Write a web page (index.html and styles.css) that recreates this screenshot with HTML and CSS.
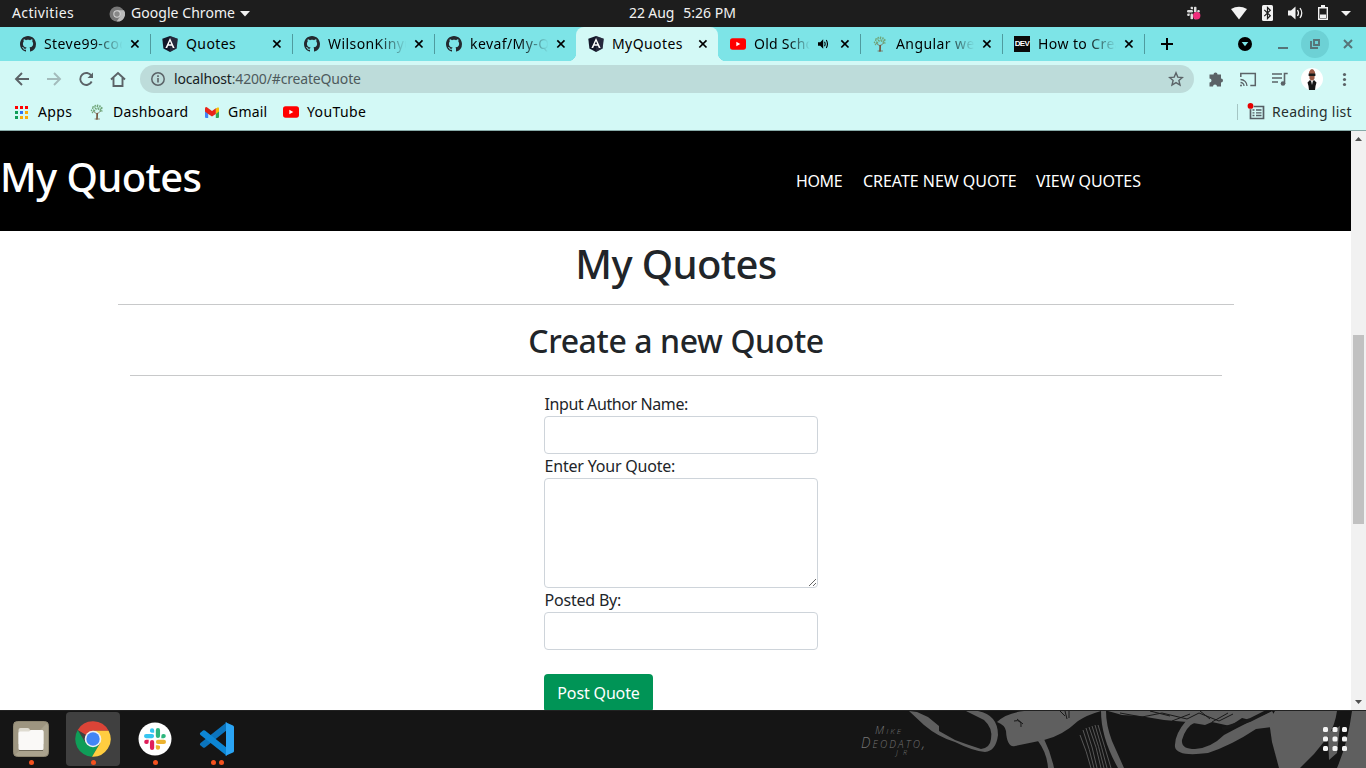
FILE: index.html
```html
<!DOCTYPE html>
<html lang="en">
<head>
<meta charset="utf-8">
<title>MyQuotes</title>
<link rel="stylesheet" href="styles.css">
</head>
<body>
<svg class="defs" aria-hidden="true">
  <symbol id="github" viewBox="0 0 16 16"><path fill="#24292f" d="M8 0C3.58 0 0 3.58 0 8c0 3.54 2.29 6.53 5.47 7.59.4.07.55-.17.55-.38 0-.19-.01-.82-.01-1.49-2.01.37-2.53-.49-2.69-.94-.09-.23-.48-.94-.82-1.13-.28-.15-.68-.52-.01-.53.63-.01 1.08.58 1.23.82.72 1.21 1.87.87 2.33.66.07-.52.28-.87.51-1.07-1.78-.2-3.64-.89-3.64-3.95 0-.87.31-1.59.82-2.15-.08-.2-.36-1.02.08-2.12 0 0 .67-.21 2.2.82.64-.18 1.32-.27 2-.27s1.36.09 2 .27c1.53-1.04 2.2-.82 2.2-.82.44 1.1.16 1.92.08 2.12.51.56.82 1.27.82 2.15 0 3.07-1.87 3.75-3.65 3.95.29.25.54.73.54 1.48 0 1.07-.01 1.93-.01 2.2 0 .21.15.46.55.38A8.01 8.01 0 0 0 16 8c0-4.42-3.58-8-8-8z"/></symbol>
  <symbol id="angular" viewBox="0 0 16 16"><path fill="#14182a" d="M8 0l7.7 2.7-1.1 9.8L8 16l-6.600-3.500L.3 2.700z"/><path fill="#35384a" d="M8 0v16l6.600-3.500L15.700 2.700z" opacity=".55"/><path fill="#fff" fill-rule="evenodd" d="M8 2l4.600 10H10.800l-.9-2.300H6.100L5.200 12H3.400zm0 3.200L6.700 8.300h2.600z"/></symbol>
  <symbol id="tree" viewBox="0 0 16 16"><g fill="none" stroke="#76563f" stroke-linecap="round"><path stroke-width="1.700" d="M8 15l.2-5.500"/><path stroke-width=".7" d="M6 15h4.500M8 10L4.500 7.500M8.200 10l3.500-3"/></g><g fill="none" stroke="#6fa578" stroke-width="1.500" stroke-linecap="round" stroke-dasharray=".2 2.300"><path d="M2.500 6.500c1-5 10-6 11 0M3.500 8.500c2-6 8-6 10 0M5.500 7c1-3 4-3 6 0M4 3c3-3 7-2 9 1"/></g></symbol>
  <symbol id="youtube" viewBox="0 0 16 12"><rect width="16" height="11.500" y=".2" rx="2.600" fill="#f00"/><path fill="#fff" d="M6.300 3.700v4.600L10.300 6z"/></symbol>
  <symbol id="close" viewBox="0 0 10 10"><path d="M1.300 1.300l7.200 7.200M8.500 1.300L1.300 8.500" stroke="currentColor" stroke-width="1.700"/></symbol>
  <symbol id="slack" viewBox="0 0 24 24">
    <g fill="var(--s1,#36c5f0)"><rect x="0" y="6.500" width="11" height="4.600" rx="2.300"/><path d="M6.500 2.500a2.300 2.300 0 0 1 4.600 0v2.600H8.800a2.300 2.300 0 0 1-2.300-2.600z"/></g>
    <g fill="var(--s2,#2eb67d)"><rect x="12.900" y="0" width="4.600" height="11" rx="2.300"/><path d="M21.500 6.500a2.300 2.300 0 0 1 0 4.600h-2.600V8.800a2.300 2.300 0 0 1 2.600-2.300z"/></g>
    <g fill="var(--s3,#ecb22e)"><rect x="13" y="12.900" width="11" height="4.600" rx="2.300"/><path d="M17.500 21.500a2.300 2.300 0 0 1-4.600 0v-2.600h2.300a2.300 2.300 0 0 1 2.300 2.600z"/></g>
    <g fill="var(--s4,#e01e5a)"><rect x="6.500" y="13" width="4.600" height="11" rx="2.300"/><path d="M2.500 17.500a2.300 2.300 0 0 1 0-4.600h2.600v2.300a2.300 2.300 0 0 1-2.600 2.300z"/></g>
  </symbol>
</svg>

<header class="panel">
  <span class="activities">Activities</span>
  <svg class="app-icon" viewBox="0 0 16 16"><circle cx="8" cy="8" r="7.500" fill="#777"/><path fill="#bbb" d="M8 4.200h7a7.500 7.500 0 0 1-7.400 11.300L11.400 10z"/><circle cx="8" cy="8" r="3.700" fill="#d4d4d4"/><circle cx="8" cy="8" r="2.700" fill="#888"/></svg>
  <span class="app-name">Google Chrome</span>
  <svg class="caret" viewBox="0 0 10 6"><path d="M0 0h10L5 5.500z" fill="#f2f2f2"/></svg>
  <span class="clock"><span>22 Aug</span><span class="time">5:26 PM</span></span>
  <svg class="tray" viewBox="1180 0 186 27">
    <g class="mono"><use href="#slack" x="1187" y="6.500" width="13" height="13"/></g>
    <circle cx="1196.700" cy="15.700" r="3.700" fill="#f02d7c"/>
    <path fill="#f2f2f2" d="M1231 9q8-4.500 16 0l-8 10.500z"/>
    <rect x="1262" y="5" width="11" height="16" rx="1.500" fill="#f2f2f2"/>
    <path d="M1264.300 9.800l6 6-2.800 2.700V7.500l2.800 2.700-6 6" fill="none" stroke="#1d1d1d" stroke-width="1.200"/>
    <path fill="#f2f2f2" d="M1288 10.500h3l4.500-4v13l-4.500-4h-3z"/>
    <path d="M1297.500 10q2 3 0 6M1300 8q3.500 5 0 10" fill="none" stroke="#f2f2f2" stroke-width="1.300"/>
    <path d="M1318.700 7.700h8.600v11.600h-8.600z" fill="none" stroke="#f2f2f2" stroke-width="1.400"/><path fill="#f2f2f2" d="M1321 5h4v2.500h-4zM1320 14.500h6V18h-6z"/>
    <path fill="#f2f2f2" d="M1341 11h10l-5 5z"/>
  </svg>
</header>

<nav class="tabs">
  <div class="tab"><svg class="fav"><use href="#github"/></svg><span class="title fade">Steve99-cod</span><svg class="x"><use href="#close"/></svg></div>
  <div class="tab"><svg class="fav"><use href="#angular"/></svg><span class="title">Quotes</span><svg class="x"><use href="#close"/></svg></div>
  <div class="tab"><svg class="fav"><use href="#github"/></svg><span class="title fade">WilsonKinyu</span><svg class="x"><use href="#close"/></svg></div>
  <div class="tab before-active"><svg class="fav"><use href="#github"/></svg><span class="title fade">kevaf/My-Q</span><svg class="x"><use href="#close"/></svg></div>
  <div class="tab active"><svg class="fav"><use href="#angular"/></svg><span class="title">MyQuotes</span><svg class="x"><use href="#close"/></svg></div>
  <div class="tab after-active"><svg class="fav yt"><use href="#youtube"/></svg><span class="title fade short">Old Scho</span><svg class="sound" viewBox="0 0 10 10"><path d="M0 3.300h2.200L5.200.3v9.400l-3-3H0z"/><path d="M6.500 2.800q1.300 2.200 0 4.400M8.300 1q2.300 4 0 8" fill="none" stroke="#000" stroke-width="1.100"/></svg><svg class="x"><use href="#close"/></svg></div>
  <div class="tab"><svg class="fav"><use href="#tree"/></svg><span class="title fade">Angular we</span><svg class="x"><use href="#close"/></svg></div>
  <div class="tab"><span class="dev">DEV</span><span class="title fade">How to Crea</span><svg class="x"><use href="#close"/></svg></div>
  <svg class="window-controls" viewBox="1144 27 222 34">
    <path d="M1144.500 34v20" stroke="#4f9b9f"/>
    <path d="M1161 44h12M1167 38v12" stroke="#000" stroke-width="2"/>
    <circle cx="1245" cy="44" r="7" fill="#000"/><path fill="#7de4e7" d="M1241.700 42h6.600l-3.300 4.300z"/>
    <path d="M1278 48h10" stroke="#567478" stroke-width="2"/>
    <circle cx="1315" cy="44" r="14" fill="#6dd1d5"/>
    <path d="M1314 40h5v5h-5zM1311 41v7h7" fill="none" stroke="#567478" stroke-width="1.900"/>
    <path d="M1344 40l8 8M1352 40l-8 8" stroke="#567478" stroke-width="2"/>
  </svg>
</nav>

<div class="toolbar">
  <svg class="nav-icons" viewBox="0 61 140 36" fill="none" stroke="#5b6367" stroke-width="1.900">
    <path d="M29 79H16M22 73l-6 6 6 6"/>
    <path d="M47 79h13M54 73l6 6-6 6" stroke="#a3bbbb"/>
    <path d="M91.500 76A6 6 0 1 0 91.700 81.500"/><path d="M93 72.500V78h-5.500z" fill="#5b6367" stroke="none"/>
    <path d="M111 79.500l7-6.500 7 6.500M113.500 78v8h9v-8"/>
  </svg>
  <div class="omnibox">
    <svg class="info" viewBox="0 0 16 16" fill="none" stroke="#5b6367"><circle cx="8" cy="8" r="6.200" stroke-width="1.500"/><path d="M8 7v4.500M8 4.300v1.700" stroke-width="1.600"/></svg>
    <span class="url"><b>localhost</b>:4200/#createQuote</span>
    <svg class="star" viewBox="0 0 16 16"><path d="M8 1.800l1.800 4.300 4.600.4-3.500 3 1.100 4.500L8 11.600 4 14l1.100-4.500-3.500-3 4.600-.4z" fill="none" stroke="#5b6367" stroke-width="1.400"/></svg>
  </div>
  <svg class="actions" viewBox="1194 61 172 36" fill="#5b6367">
    <path d="M1209.500 74.500h4a2 2 0 1 1 4 0h3.500v4a2 2 0 1 1 0 4V86.500h-4a2 2 0 0 0-4 0h-3.500v-4a2 2 0 0 0 0-4z"/>
    <path d="M1240.800 77v-3.500h14.500v12h-5" fill="none" stroke="#5b6367" stroke-width="1.500"/>
    <path d="M1240.500 79.500a6.500 6.500 0 0 1 6.500 6.500M1240.500 82.500a3.500 3.500 0 0 1 3.500 3.500" fill="none" stroke="#5b6367" stroke-width="1.300"/><circle cx="1241" cy="85.500" r="1"/>
    <path d="M1272 74h10M1272 78h10M1272 82h6M1284.500 84v-10.500h3.200" fill="none" stroke="#5b6367" stroke-width="1.600"/><circle cx="1283" cy="83.500" r="2.300"/>
    <circle cx="1312" cy="79" r="11" fill="#fff"/>
    <path d="M1309 72q3-6 6 0l-.6 7q-2.400 3-4.800 0z" fill="#9b5a46"/><path d="M1308.600 73.500h6.800v2.500h-6.800z" fill="#191919"/><path d="M1310 80l2 2 2-2 2.500 2.500-1 3.500-.5 4h-6l-.5-4-1-3.500z" fill="#151515"/><path d="M1311 81h2l-1 4z" fill="#ddd"/>
    <circle cx="1344.500" cy="74.500" r="1.600"/><circle cx="1344.500" cy="79.500" r="1.600"/><circle cx="1344.500" cy="84.500" r="1.600"/>
  </svg>
</div>

<div class="bookmarks">
  <svg class="apps-icon" viewBox="0 0 13 13"><path fill="#f00" d="M0 0h3v3H0zM5 0h3v3H5zM10 0h3v3h-3z"/><path fill="#0f9d58" d="M0 5h3v3H0zM0 10h3v3H0z"/><path fill="#2f73f5" d="M5 5h3v3H5z"/><path fill="#fbac0a" d="M10 5h3v3h-3zM5 10h3v3H5zM10 10h3v3h-3z"/></svg>
  <span class="bm b-apps">Apps</span>
  <svg class="fav"><use href="#tree"/></svg>
  <span class="bm b-dash">Dashboard</span>
  <svg class="gmail" viewBox="0 0 14 11"><path fill="#4285f4" d="M0 1.500h3.200V11H1a1 1 0 0 1-1-1z"/><path fill="#34a853" d="M10.800 1.500H14V10a1 1 0 0 1-1 1h-2.200z"/><path fill="#fbbc04" d="M10.800 1.700Q14-1.500 14 2v2.500L10.800 7z"/><path fill="#ea2418" d="M0 2Q0-1.500 3.200 1.200L7 4l3.800-2.800V7L7 9.600 3.200 7 0 4.500z"/></svg>
  <span class="bm b-gmail">Gmail</span>
  <svg class="fav yt"><use href="#youtube"/></svg>
  <span class="bm b-yt">YouTube</span>
  <div class="reading">
    <svg viewBox="0 0 18 18"><path d="M3.500 3.500h13v12h-13z" fill="none" stroke="#555e64" stroke-width="1.700"/><path d="M5.500 7h2M9 7h5.500M5.500 9.800h2M9 9.800h5.500M5.500 12.500h2M9 12.500h5.500" stroke="#555e64" stroke-width="1.300"/><circle cx="3.500" cy="2.900" r="3.300" fill="#d3f9f6"/><circle cx="3.500" cy="2.900" r="2.900" fill="#e60000"/></svg>
    <span class="bm">Reading list</span>
  </div>
</div>

<div class="viewport">
  <main class="page">
    <div class="navbar">
      <h1 class="brand">My Quotes</h1>
      <ul class="links"><li class="l-home">HOME</li><li class="l-create">CREATE NEW QUOTE</li><li class="l-view">VIEW QUOTES</li></ul>
    </div>
    <section class="content">
      <h1 class="heading">My Quotes</h1>
      <div class="create">
        <h2 class="subheading">Create a new Quote</h2>
        <form class="form">
          <label class="f-author">Input Author Name:</label>
          <input class="field" type="text">
          <label class="f-quote">Enter Your Quote:</label>
          <textarea class="field area"></textarea>
          <label class="f-by">Posted By:</label>
          <input class="field" type="text">
          <button class="submit" type="button">Post Quote</button>
        </form>
      </div>
    </section>
  </main>
  <aside class="scrollbar">
    <svg viewBox="0 0 15 15"><path d="M4 10h7L7.500 6z" fill="#505050"/></svg>
    <div class="track"><div class="thumb"></div></div>
    <svg viewBox="0 0 15 15"><path d="M4 5h7L7.500 9z" fill="#505050"/></svg>
  </aside>
</div>

<footer class="dock">
  <div class="launcher"><svg viewBox="0 0 36 36"><rect x=".5" y=".5" width="35" height="35" rx="4" fill="#aaa38e" stroke="#8e8772"/><path d="M1 1h34L1 35z" fill="#958c76" opacity=".6"/><path d="M5.500 9q0-2 2-2h7q2 0 2.500 2h11.500q2 0 2 2v12H5.500z" fill="#dedbd0"/><path d="M5.500 12q0-1.500 1.500-1.500h9l2-1.500h11q1.500 0 1.500 1.500v17q0 1.500-1.500 1.500H7q-1.500 0-1.500-1.500z" fill="#faf9f7"/><path d="M6 29.500h24" stroke="#6e6858"/></svg><i></i></div>
  <div class="launcher current"><svg viewBox="0 0 36 36"><path fill="#db4437" d="M18 18L2.700 9A17.700 17.700 0 0 1 33.600 9.800H18z"/><path fill="#0f9d58" d="M2.700 9A17.700 17.700 0 0 0 17 35.700L25 22 18 18 10.700 22z"/><path fill="#ffcd40" d="M33.600 9.800A17.700 17.700 0 0 1 17 35.700L25.200 22 18 9.800z"/><circle cx="18" cy="18" r="8.300" fill="#f1f1f1"/><circle cx="18" cy="18" r="6.700" fill="#4285f4"/></svg><i></i></div>
  <div class="launcher"><svg viewBox="0 0 36 36"><circle cx="18" cy="18" r="16.500" fill="#fff"/><use href="#slack" x="7" y="7" width="22" height="22"/></svg><i></i></div>
  <div class="launcher"><svg viewBox="0 0 36 36"><path fill="#0b74bd" d="M1 24l3 2.600q1 .6 2-.2L28 9V1L1.500 22q-1 1-.5 2z"/><path fill="#0d86d4" d="M1 12l3-2.600q1-.6 2 .2L28 27v8L1.500 14q-1-1 -.5-2z"/><path fill="#2aa4f4" d="M26 1l8 3.500q1 .5 1 1.500v24q0 1-1 1.500L26 35q1-.5 1-2V3q0-1.500-1-2z"/></svg><i></i><i></i></div>
  <svg class="art" viewBox="820 710 546 58">
    <g fill="#5f5f5f">
      <path d="M909 711L917 712 928 717 939 726 939 731 955 740 966 744 981 749Q990 748 991 739 993 728 984 720L976 716 966 711H978Q998 715 998 735 996 751 985 752 973 751 955 742 938 737 924 725z"/>
      <path d="M997 722Q1006 713 1024 711H1101Q1087 715 1078 721 1062 736 1044 740L1015 746Q1007 748 1006 731 1005 725 997 722z"/>
      <path d="M1038 741l6-2q7 14 10 29h-6q-1-15-10-27z"/>
      <path d="M1101 711h5q0 14 6 30l12 27h-6q-17-30-17-57z"/>
      <path d="M1108 711h160l-14 10-12-3-12 8-18-4-7 3-18-3-23-2-24-4-18-1z"/>
      <path d="M1186 721l10 1q-10 4-14 18-1 9 13 9 16-1 29-14 26-14 48-24l8 15-24 3q-24 16-48 24-31 4-33-6-1-12 11-26z"/>
      <path d="M1275 711h62q-2 15-10 27l-13 16-14 14h-21l-7-26-3-21z"/>
      <path d="M1352 711h14v57h-29q11-26 15-57zM1328 733l12-7-3 27-8 7z"/>
    </g>
    <g fill="none" stroke="#5f5f5f" stroke-width=".9"><path d="M1080 735q7 17 11 33M1083 730q7 20 11 38M1086 728q7 20 11 40M1089 727q8 20 12 41M1092 726q7 20 12 42M1095 725q7 23 12 43M1098 725q7 23 13 43"/></g>
    <g fill="none" stroke="#181818" stroke-width="1"><path d="M1014 721q8-2 7 6M1017 719l6 5M1060 711l5 5M1065 711l2 8M1069 711v7M1120 713l22 4 20-4 25 6 12-6 20 8 14-7M1150 711l20 5M1200 711l10 8M1172 721l18-7M1212 722l16-9"/><path stroke-width="3.500" d="M1222 729l28-9 22-11"/></g>
    <g class="signature"><text x="875" y="734" font-size="11" textLength="26">Mike</text><text x="861" y="748" font-size="14" textLength="64">Deodato,</text><text x="896" y="755" font-size="7" textLength="11">JR</text></g>
    <g fill="#f4f4f4"><rect x="1323" y="727" width="5" height="5" rx="1.500"/><rect x="1332.500" y="727" width="5" height="5" rx="1.500"/><rect x="1342" y="727" width="5" height="5" rx="1.500"/><rect x="1323" y="736.500" width="5" height="5" rx="1.500"/><rect x="1332.500" y="736.500" width="5" height="5" rx="1.500"/><rect x="1342" y="736.500" width="5" height="5" rx="1.500"/><rect x="1323" y="746" width="5" height="5" rx="1.500"/><rect x="1332.500" y="746" width="5" height="5" rx="1.500"/><rect x="1342" y="746" width="5" height="5" rx="1.500"/></g>
  </svg>
</footer>
</body>
</html>
```
FILE: styles.css
```css
* { box-sizing: border-box; }
body { margin: 0; width: 1366px; height: 768px; overflow: hidden; display: flex; flex-direction: column; font-family: "Noto Sans", "Open Sans", sans-serif; font-size: 14px; color: #000; }
svg { display: block; flex: none; }
.defs { width: 0; height: 0; position: absolute; }
span { white-space: nowrap; }

.panel { height: 27px; flex: none; background: #1d1d1d; color: #f2f2f2; display: flex; align-items: center; padding-left: 12px; line-height: 26px; }
.activities { width: 97px; letter-spacing: .38px; }
.app-icon { width: 16px; height: 16px; margin-right: 6px; }
.app-name { width: 109px; letter-spacing: .05px; }
.activities, .app-name, .clock { height: 27px; }
.caret { width: 10px; height: 6px; }
.clock { flex: 1; display: flex; gap: 9px; padding-left: 379px; letter-spacing: -.1px; }
.time { letter-spacing: 0; }
.tray { width: 186px; height: 27px; }
.mono { --s1: #ddd; --s2: #ddd; --s3: #ddd; --s4: #ddd; }

.tabs { height: 34px; flex: none; display: flex; background: #7de4e7; padding-left: 8px; }
.tab { width: 142px; flex: none; display: flex; align-items: center; padding-left: 12px; }
.tab + .tab { background: linear-gradient(#4f9b9f, #4f9b9f) 0 7px / 1px 20px no-repeat; }
.tabs .before-active { background: radial-gradient(circle at 0 0, transparent 8px, #d3f9f6 8.500px) 134px 26px / 8px 8px no-repeat, linear-gradient(#4f9b9f, #4f9b9f) 0 7px / 1px 20px no-repeat; }
.tabs .active { background: #d3f9f6; border-radius: 8px 8px 0 0; }
.tabs .after-active { background: radial-gradient(circle at 100% 0, transparent 8px, #d3f9f6 8.500px) 0 26px / 8px 8px no-repeat; }
.fav { width: 16px; height: 16px; margin-right: 8px; }
.fav.yt { height: 12px; }
.title { width: 80px; overflow: hidden; margin-right: 6px; line-height: 34px; letter-spacing: .42px; }
.fade { -webkit-mask-image: linear-gradient(90deg, #000 60%, transparent 98%); mask-image: linear-gradient(90deg, #000 60%, transparent 98%); }
.short { width: 57px; margin-right: 7px; letter-spacing: .25px; }
.sound { width: 10px; height: 10px; margin-right: 12px; }
.x { width: 10px; height: 10px; }
.dev { width: 16px; height: 16px; margin-right: 8px; background: #0a0a0a; color: #fff; font: bold 8px/16px "Liberation Sans", sans-serif; letter-spacing: -.6px; text-align: center; }
.window-controls { width: 222px; height: 34px; }

.toolbar { height: 36px; flex: none; background: #d3f9f6; display: flex; align-items: center; }
.nav-icons { width: 140px; height: 36px; }
.omnibox { width: 1054px; height: 28px; border-radius: 14px; background: #bddcda; display: flex; align-items: center; padding: 0 10px; color: #4d5a5c; }
.info { width: 16px; height: 16px; margin-right: 8px; }
.url { flex: 1; letter-spacing: -.16px; padding-bottom: 2px; }
.url b { font-weight: 400; color: #17211f; }
.star { width: 16px; height: 16px; }
.actions { width: 172px; height: 36px; }

.bookmarks { height: 34px; flex: none; background: #d3f9f6; border-bottom: 1px solid #87aaa8; display: flex; align-items: center; padding: 0 14px 3px 15px; }
.bm { letter-spacing: .4px; padding-bottom: 2px; }
.apps-icon { width: 13px; height: 13px; margin-right: 10px; }
.b-apps { width: 51px; }
.b-dash { width: 92px; letter-spacing: .33px; }
.gmail { width: 14px; height: 11px; margin-right: 9px; }
.b-gmail { width: 55px; letter-spacing: .2px; }
.reading { margin-left: auto; height: 16px; border-left: 1px solid #a5c6c4; padding-left: 9px; display: flex; align-items: center; gap: 7px; color: #27302f; }
.reading .bm { width: 80px; letter-spacing: .28px; }
.reading svg { width: 18px; height: 18px; }

.viewport { height: 579px; flex: none; display: flex; background: #fff; }
.page { width: 1351px; overflow: hidden; color: #212529; font-size: 16px; }
.navbar { height: 100px; background: #000; color: #fff; display: flex; padding-top: 22px; justify-content: space-between; }
h1, h2 { margin: 0; font-weight: 500; white-space: nowrap; }
.brand { font-size: 40px; line-height: 48px; letter-spacing: -.6px; }
.links { list-style: none; margin: 16px 210px 0 0; padding: 0; display: flex; gap: 20px; line-height: 24px; white-space: nowrap; }
.l-home { width: 47px; letter-spacing: -.4px; }
.l-create { width: 153px; letter-spacing: -.03px; }
.l-view { width: 105px; letter-spacing: -.08px; }
.content { padding: 9px 117px 0 118px; }
.heading { font-size: 40px; line-height: 48px; letter-spacing: -.6px; height: 65px; text-align: center; border-bottom: 1px solid #c8c9ca; }
.create { padding: 16px 12px 0; }
.subheading { font-size: 32px; line-height: 40px; letter-spacing: -.4px; height: 55px; text-align: center; border-bottom: 1px solid #c8c9ca; }
.form { width: 274px; margin: 16px 0 0 414px; display: flex; flex-direction: column; align-items: flex-start; }
.form label { line-height: 24px; padding-left: .5px; white-space: nowrap; }
.f-author { letter-spacing: -.4px; }
.f-quote, .f-by { letter-spacing: -.2px; }
.field { width: 274px; height: 38px; border: 1px solid #ced4da; border-radius: 4px; background: #fff; margin: 0; outline: 0; }
.area { height: 110px; resize: both; }
.submit { width: 109px; height: 38px; margin-top: 24px; padding: 0; border: 0; border-radius: 4px; background: #009456; color: #fff; font: inherit; letter-spacing: -.15px; white-space: nowrap; }
.scrollbar { width: 15px; background: #f1f1f1; display: flex; flex-direction: column; }
.scrollbar svg { width: 15px; height: 15px; }
.track { flex: 1; padding: 189px 2px 0; }
.thumb { height: 189px; background: #c1c1c1; }

.dock { height: 58px; flex: none; background: #151515; border-top: 1px solid #222; display: flex; padding: 1px 0 0 4px; }
.launcher { width: 54px; height: 54px; margin-right: 8px; border-radius: 4px; display: flex; flex-wrap: wrap; justify-content: center; align-content: flex-start; gap: 3px 3px; padding-top: 9px; }
.launcher svg { width: 36px; height: 36px; margin: 0 9px; }
.launcher i { width: 5px; height: 5px; border-radius: 50%; background: #f4511e; }
.current { background: #404040; }
.art { width: 546px; height: 58px; margin: -2px 0 0 auto; }
.signature { fill: #757575; font-family: "Open Sans", sans-serif; font-weight: 300; font-style: italic; font-variant: small-caps; }
```
